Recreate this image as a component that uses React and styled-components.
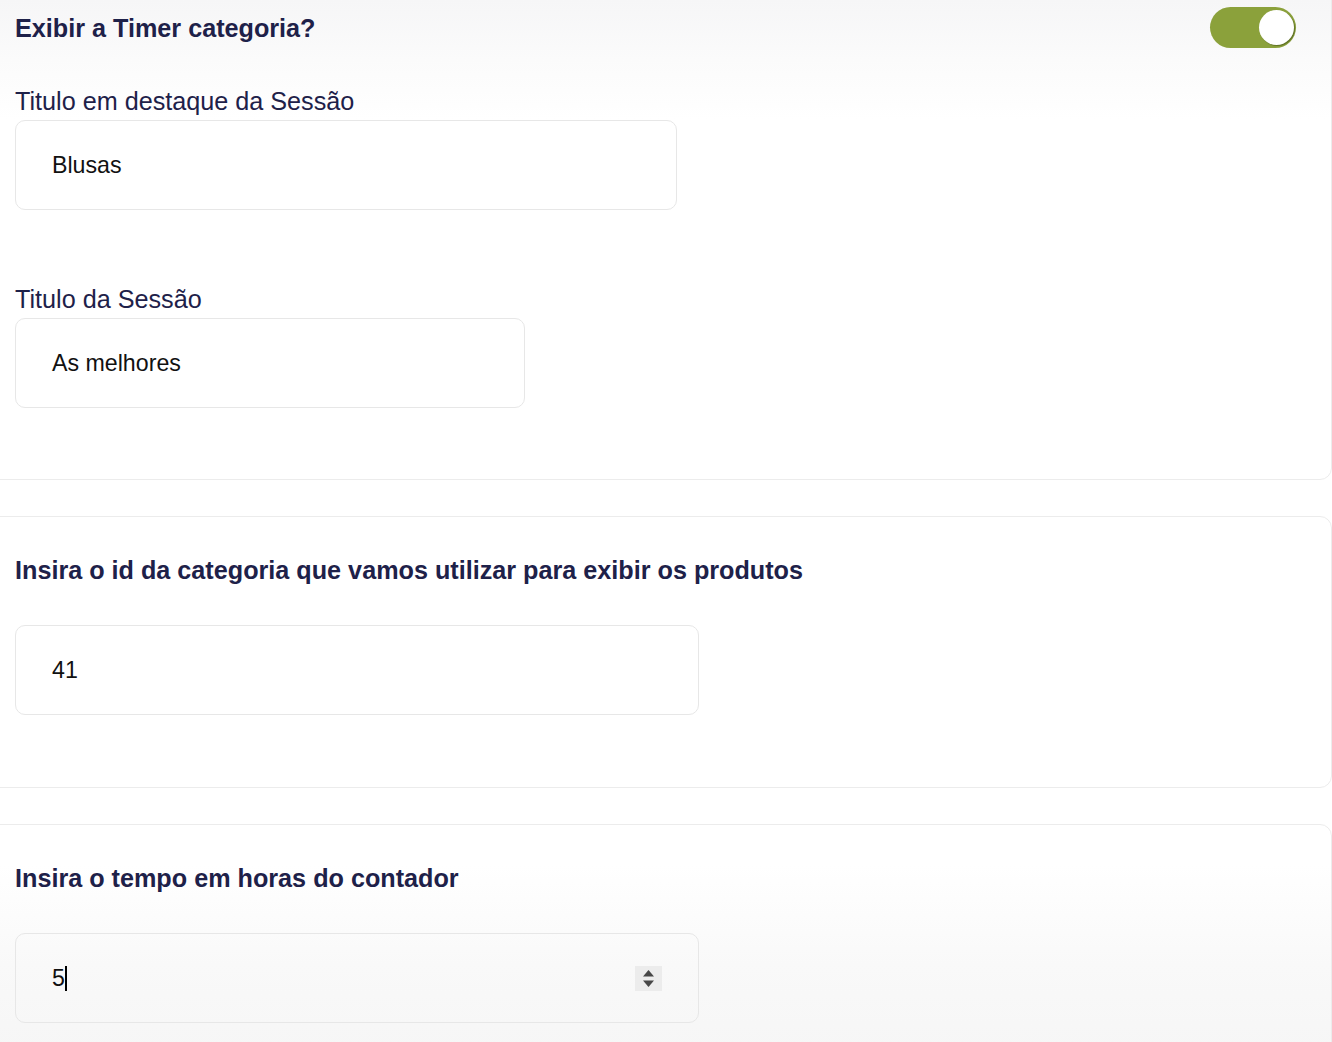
import React from "react";
import styled, { createGlobalStyle } from "styled-components";

const Global = createGlobalStyle`
  html, body { margin: 0; padding: 0; background: #ffffff; }
  body { font-family: "Liberation Sans", Arial, Helvetica, sans-serif; overflow: hidden; }
  * { box-sizing: border-box; }
`;

const Page = styled.div`
  display: flex;
  flex-direction: column;
  gap: 36px;
  width: 1332px;
  height: 1042px;
  overflow: hidden;
`;

const Card = styled.section`
  flex-shrink: 0;
  margin-left: -14px;
  width: calc(100% + 14px);
  border: 1px solid #ececec;
  border-radius: 12px;
  padding: ${(p) => p.$pad};
  padding-left: 28px;
  background: ${(p) => p.$bg || "#ffffff"};
  display: flex;
  flex-direction: column;
  align-items: flex-start;
`;

const ToggleRow = styled.div`
  align-self: stretch;
  display: flex;
  align-items: center;
  justify-content: space-between;
  padding-right: 35px;
  margin-bottom: 40px;
`;

const Heading = styled.h2`
  margin: 0;
  font-size: 25.2px;
  line-height: 30px;
  font-weight: 700;
  color: #1e2149;
`;

const SectionHeading = styled(Heading)`
  margin-bottom: 40px;
`;

const Switch = styled.div`
  width: 86px;
  height: 41px;
  border-radius: 21px;
  background: #8ba13b;
  display: flex;
  align-items: center;
  justify-content: ${(p) => (p.$on ? "flex-end" : "flex-start")};
  padding: 0 2px 0 3px;
`;

const Knob = styled.span`
  width: 35px;
  height: 35px;
  border-radius: 50%;
  background: #ffffff;
  box-shadow: 1px 1px 1px rgba(40, 50, 10, 0.45);
`;

const Field = styled.div`
  display: flex;
  flex-direction: column;
  gap: 6px;
  & + & { margin-top: 76px; }
`;

const Label = styled.label`
  font-size: 25.2px;
  line-height: 26px;
  font-weight: 400;
  color: #1e2149;
`;

const InputBox = styled.div`
  width: ${(p) => p.$w}px;
  height: 90px;
  border: 1px solid #e7e7e7;
  border-radius: 10px;
  background: transparent;
  display: flex;
  align-items: center;
  padding: 0 36px 0 36px;
  font-size: 23.2px;
  color: #111111;
`;

const Value = styled.span`
  line-height: 26px;
`;

const Caret = styled.span`
  width: 2px;
  height: 25px;
  background: #000;
`;

const Spinner = styled.span`
  margin-left: auto;
  width: 27px;
  height: 25px;
  background: #ececec;
  display: flex;
  align-items: center;
  justify-content: center;
`;

export default function App() {
  return (
    <>
      <Global />
      <Page>
        <Card
          $pad="7px 0 71px"
          $bg="linear-gradient(180deg, #f6f6f7 0px, #fbfbfb 60px, #ffffff 120px)"
          style={{ marginTop: "-1px", borderTopLeftRadius: 0, borderTopRightRadius: 0 }}
        >
          <ToggleRow>
            <Heading>Exibir a Timer categoria?</Heading>
            <Switch $on>
              <Knob />
            </Switch>
          </ToggleRow>
          <Field>
            <Label>Titulo em destaque da Sessão</Label>
            <InputBox $w={662}>
              <Value>Blusas</Value>
            </InputBox>
          </Field>
          <Field>
            <Label>Titulo da Sessão</Label>
            <InputBox $w={510}>
              <Value>As melhores</Value>
            </InputBox>
          </Field>
        </Card>

        <Card $pad="38px 0 72px">
          <SectionHeading>Insira o id da categoria que vamos utilizar para exibir os produtos</SectionHeading>
          <InputBox $w={684}>
            <Value>41</Value>
          </InputBox>
        </Card>

        <Card
          $pad="38px 0 72px"
          $bg="linear-gradient(180deg, #ffffff 0px, #ffffff 40px, #f9f9f9 140px, #f6f6f6 230px)"
        >
          <SectionHeading>Insira o tempo em horas do contador</SectionHeading>
          <InputBox $w={684}>
            <Value>5</Value>
            <Caret />
            <Spinner>
              <svg width="13" height="19" viewBox="0 0 13 19">
                <path d="M6.5 1 L12 7.5 H1 Z" fill="#474747" />
                <path d="M1 11.5 H12 L6.5 18 Z" fill="#474747" />
              </svg>
            </Spinner>
          </InputBox>
        </Card>
      </Page>
    </>
  );
}
